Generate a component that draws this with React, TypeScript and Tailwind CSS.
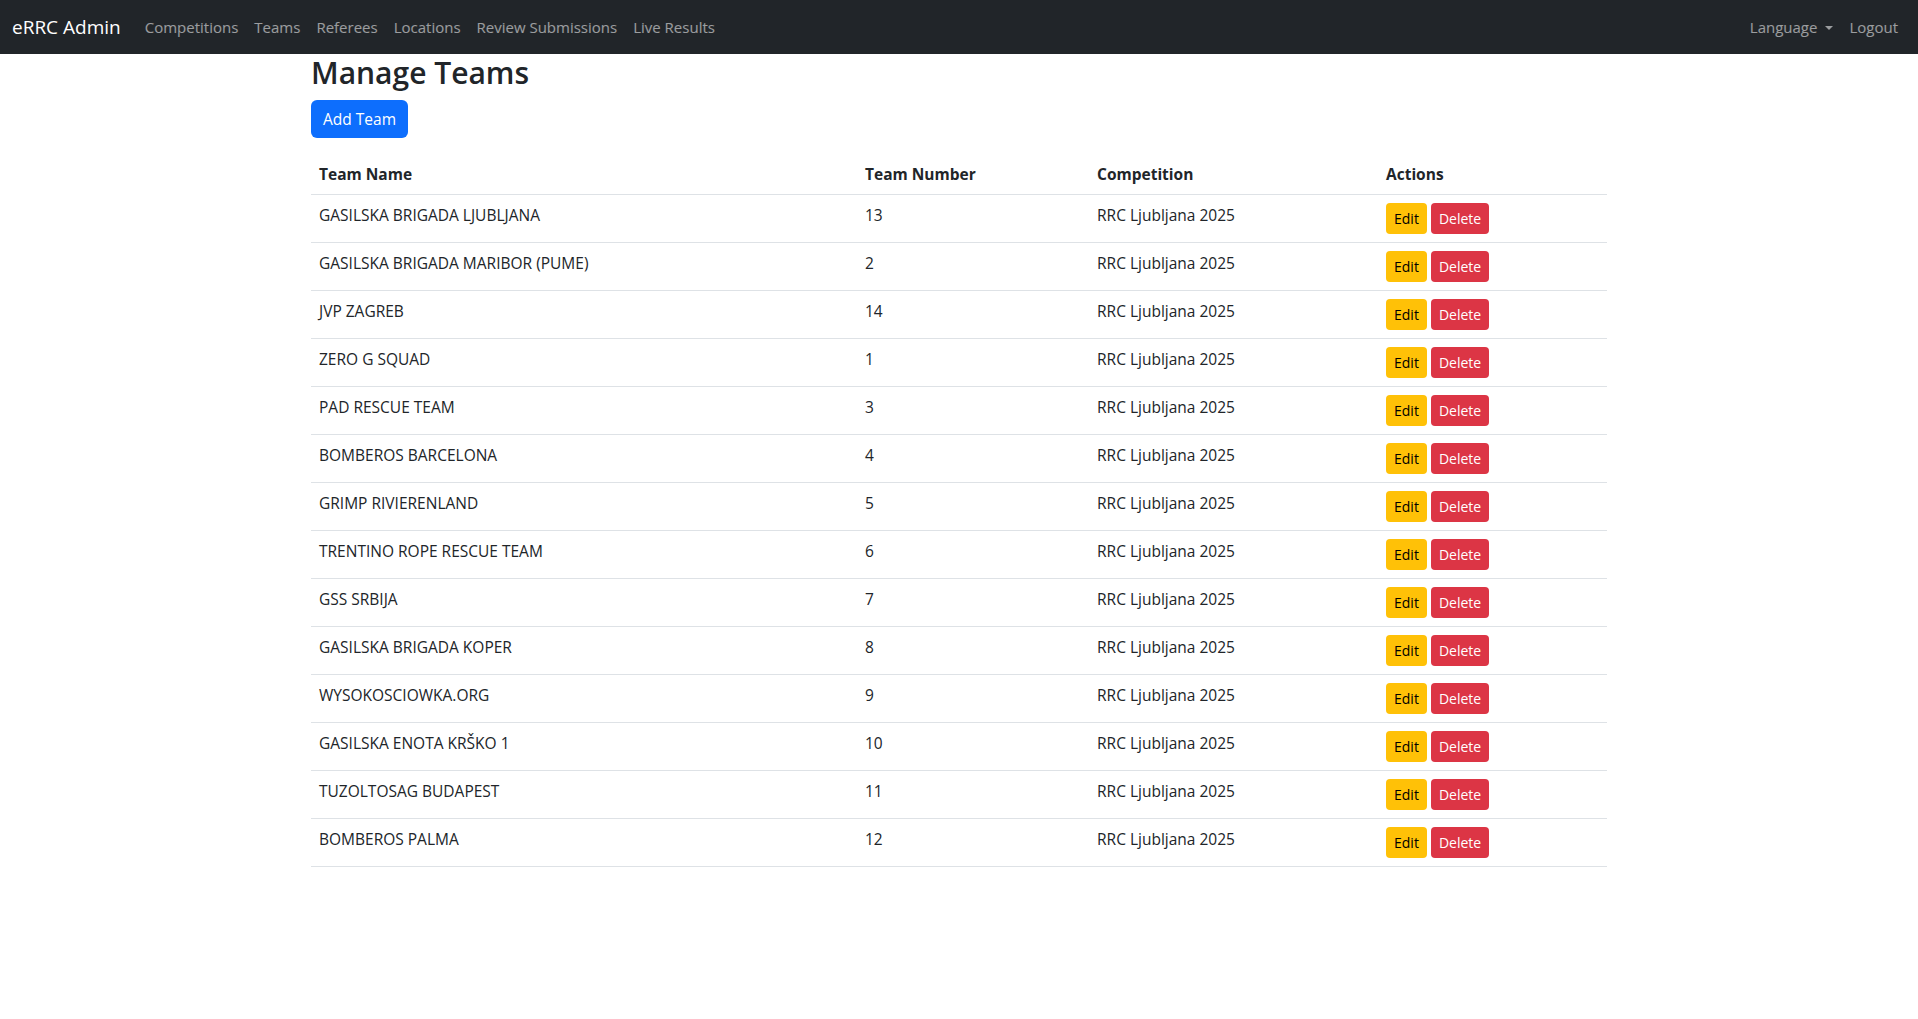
import React from 'react';

const teams: [string, number][] = [
  ['GASILSKA BRIGADA LJUBLJANA', 13],
  ['GASILSKA BRIGADA MARIBOR (PUME)', 2],
  ['JVP ZAGREB', 14],
  ['ZERO G SQUAD', 1],
  ['PAD RESCUE TEAM', 3],
  ['BOMBEROS BARCELONA', 4],
  ['GRIMP RIVIERENLAND', 5],
  ['TRENTINO ROPE RESCUE TEAM', 6],
  ['GSS SRBIJA', 7],
  ['GASILSKA BRIGADA KOPER', 8],
  ['WYSOKOSCIOWKA.ORG', 9],
  ['GASILSKA ENOTA KRŠKO 1', 10],
  ['TUZOLTOSAG BUDAPEST', 11],
  ['BOMBEROS PALMA', 12],
];

const links = ['Competitions', 'Teams', 'Referees', 'Locations', 'Review Submissions', 'Live Results'];

export default function App() {
  return (
    <div className="min-h-screen bg-white text-[#212529] font-['Open_Sans',sans-serif]">
      {/* Navbar */}
      <nav className="h-[54px] bg-[#212529] px-3 flex items-center justify-between">
        <div className="flex items-center">
          <a className="text-white text-[19px] leading-[30px] mr-4">eRRC Admin</a>
          <ul className="flex">
            {links.map((l) => (
              <li key={l}>
                <a className="block px-2 py-2 text-[15px] leading-6 text-white/55">{l}</a>
              </li>
            ))}
          </ul>
        </div>
        <ul className="flex">
          <li>
            <a className="flex items-center px-2 py-2 text-[15px] leading-6 text-white/55">
              Language
              <span className="ml-2 mt-[2px] w-0 h-0 border-t-[4px] border-t-white/55 border-x-[4px] border-x-transparent" />
            </a>
          </li>
          <li>
            <a className="block px-2 py-2 text-[15px] leading-6 text-white/55">Logout</a>
          </li>
        </ul>
      </nav>

      {/* Content */}
      <div className="max-w-[1320px] mx-auto px-3">
        <h2 className="text-[30px] leading-[38px] font-semibold mb-2">Manage Teams</h2>
        <button className="bg-[#0d6efd] text-white text-[15.5px] leading-6 px-3 py-[7px] rounded-md mb-4">
          Add Team
        </button>

        <table className="w-full table-fixed border-collapse text-[15.5px] leading-6">
          <colgroup>
            <col className="w-[546px]" />
            <col className="w-[232px]" />
            <col className="w-[289px]" />
            <col />
          </colgroup>
          <thead>
            <tr className="border-b border-[#dee2e6]">
              <th className="text-left font-bold px-2 py-2">Team Name</th>
              <th className="text-left font-bold px-2 py-2">Team Number</th>
              <th className="text-left font-bold px-2 py-2">Competition</th>
              <th className="text-left font-bold px-2 py-2">Actions</th>
            </tr>
          </thead>
          <tbody>
            {teams.map(([name, num]) => (
              <tr key={name} className="border-b border-[#dee2e6]">
                <td className="px-2 py-2 align-top">{name}</td>
                <td className="px-2 py-2 align-top">{num}</td>
                <td className="px-2 py-2 align-top">RRC Ljubljana 2025</td>
                <td className="px-2 py-2 align-top">
                  <div className="flex gap-1">
                    <button className="bg-[#ffc107] text-black text-[14px] leading-[21px] px-2 py-[5px] rounded">Edit</button>
                    <button className="bg-[#dc3545] text-white text-[14px] leading-[21px] px-2 py-[5px] rounded">Delete</button>
                  </div>
                </td>
              </tr>
            ))}
          </tbody>
        </table>
      </div>
    </div>
  );
}
